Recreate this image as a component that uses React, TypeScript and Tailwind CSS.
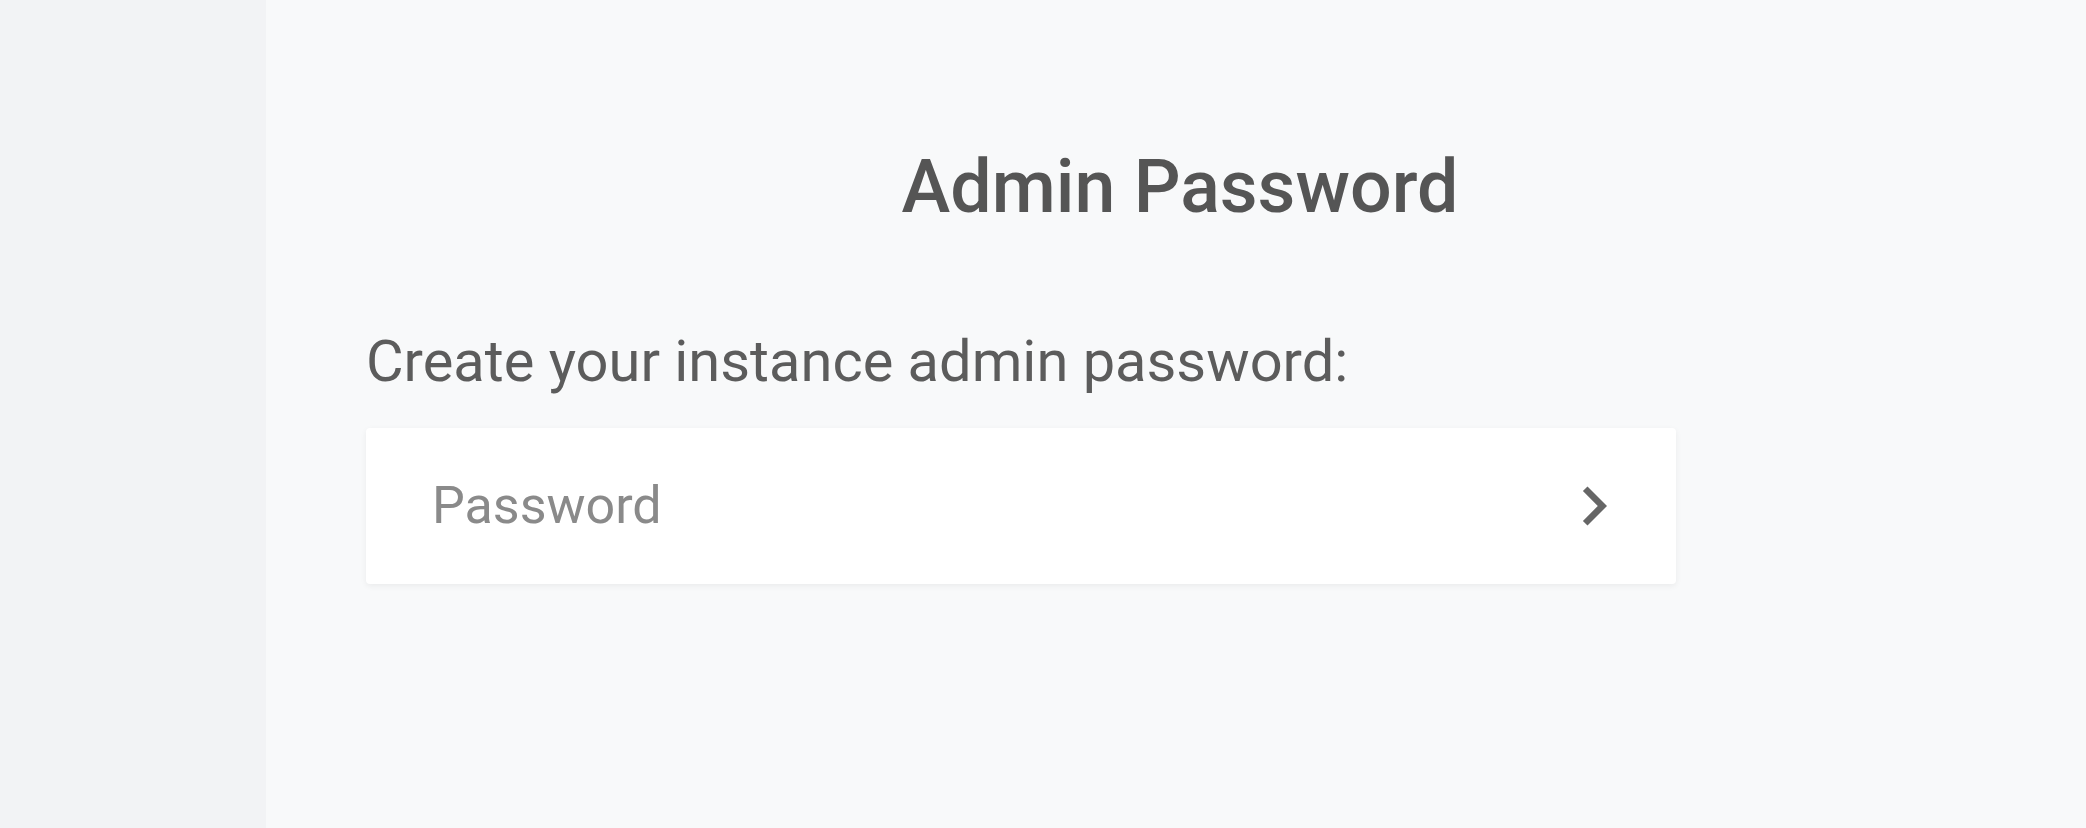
import { useState } from 'react';

export default function App() {
  const [pw, setPw] = useState('');

  return (
    <div className="flex h-[828px] w-full font-['Roboto',sans-serif]">
      <aside className="w-[266px] shrink-0 bg-[#f2f3f5]" />
      <main className="flex-1 bg-[#f8f9fa] pl-[100px] pt-[143px]">
        <h1 className="-ml-[92px] text-center text-[73.5px] leading-[88px] font-medium text-[#555555]">
          Admin Password
        </h1>
        <p className="mt-[96px] text-[57.8px] leading-[68px] text-[#5c5c5c]">
          Create your instance admin password:
        </p>
        <div className="mt-[33px] flex h-[156px] w-[1310px] items-center rounded-[4px] bg-white pl-[66px] pr-[43px] shadow-[0_2px_6px_rgba(0,0,0,0.06)]">
          <input
            type="password"
            value={pw}
            onChange={e => setPw(e.target.value)}
            placeholder="Password"
            className="flex-1 bg-transparent text-[52px] text-[#555] outline-none placeholder:text-[#8a8a8a]"
          />
          <button className="shrink-0 text-[#666]">
            <svg width="78" height="78" viewBox="0 0 24 24" fill="currentColor">
              <path d="M10 6 8.59 7.41 13.17 12l-4.58 4.59L10 18l6-6z" />
            </svg>
          </button>
        </div>
      </main>
    </div>
  );
}
